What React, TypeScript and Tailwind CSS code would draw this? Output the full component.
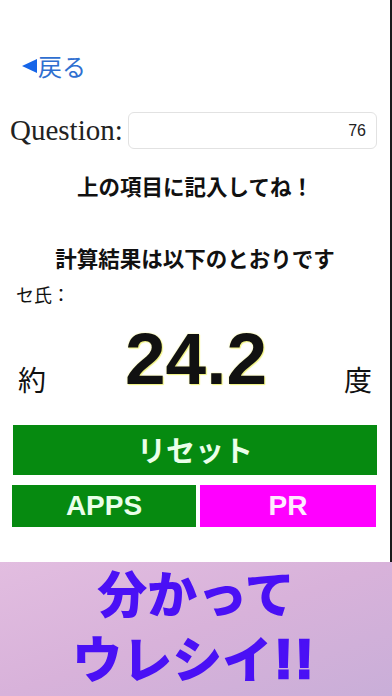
export default function App() {
  const jp = { fontFamily: '"Noto Sans CJK JP", "Noto Sans", sans-serif' };
  const banner = { fontFamily: '"Liberation Sans", "Noto Sans CJK JP", sans-serif' };
  return (
    <div className="w-[392px] h-[696px] flex flex-col bg-white overflow-hidden" style={jp}>
      <div className="h-[562px] flex flex-col border-r-2 border-[#1a1a1a]">
        <div className="mt-[52px] ml-[22px] h-[28px] flex items-center text-[#2f6fd0] text-[24px] leading-[28px]">
          <svg width="15" height="14" viewBox="0 0 15 14" className="mr-[1px]">
            <polygon points="0,7 15,0 15,14" fill="#1565e8" />
          </svg>
          <span>戻る</span>
        </div>
        <div className="mt-[32px] h-[37px] flex items-center">
          <span
            className="ml-[10px] text-[29px] text-[#222] leading-[37px]"
            style={{ fontFamily: '"Liberation Serif", serif' }}
          >
            Question:
          </span>
          <div className="ml-auto mr-[13px] w-[249px] h-[37px] rounded-[6px] border border-[#e2e2e2] flex items-center justify-end pr-[10px]">
            <span className="text-[16px] text-[#222]" style={{ fontFamily: '"Liberation Sans", sans-serif' }}>76</span>
          </div>
        </div>
        <div className="mt-[22px] h-[30px] text-center text-[21.5px] font-bold leading-[30px] text-[#111]">
          上の項目に記入してね！
        </div>
        <div className="mt-[42px] h-[30px] text-center text-[21.5px] font-bold leading-[30px] text-[#111]">
          計算結果は以下のとおりです
        </div>
        <div className="mt-[8px] ml-[16px] h-[26px] text-[18px] leading-[26px] text-[#111]">セ氏：</div>
        <div className="mt-[14px] h-[76px] flex items-end px-[18px]">
          <span className="text-[28px] leading-[40px] text-[#111] -mb-[2px]">約</span>
          <span
            className="flex-1 text-center font-bold text-[73px] leading-[76px] text-[#111] ml-[2px]"
            style={{
              fontFamily: '"Liberation Sans", sans-serif',
              textShadow: '0 0 2px #f3f38a, 1px 1px 1px #eef27a',
            }}
          >
            24.2
          </span>
          <span className="text-[28px] leading-[40px] text-[#111] -mb-[2px]">度</span>
        </div>
        <div className="mt-[28px] mx-[13px] h-[50px] bg-[#068a10] flex items-center justify-center text-[29px] font-bold text-[#eaffea]">
          リセット
        </div>
        <div className="mt-[10px] ml-[12px] mr-[14px] h-[42px] flex gap-[4px]">
          <div
            className="w-[184px] bg-[#068a10] flex items-center justify-center text-[28px] font-bold text-[#eaffea]"
            style={{ fontFamily: '"Liberation Sans", sans-serif' }}
          >
            APPS
          </div>
          <div
            className="flex-1 bg-[#ff00ff] flex items-center justify-center text-[28px] font-bold text-[#ffeaff]"
            style={{ fontFamily: '"Liberation Sans", sans-serif' }}
          >
            PR
          </div>
        </div>
      </div>
      <div className="flex-1 bg-gradient-to-br from-[#e2bde0] via-[#d8b2da] to-[#c9aed8] flex flex-col items-center justify-center">
        <div className="text-center text-[50px] font-black leading-[60px] text-[#4a10f5] -mt-[2px]" style={banner}>
          分かって
        </div>
        <div className="text-center text-[50px] font-black leading-[60px] text-[#4a10f5] -ml-[4px] mt-[3px]" style={banner}>
          ウレシイ
          <span
            className="text-[56px] font-bold tracking-[2px] ml-[2px]"
            style={{ WebkitTextStroke: '2.5px #4a10f5' }}
          >
            !!
          </span>
        </div>
      </div>
    </div>
  );
}
